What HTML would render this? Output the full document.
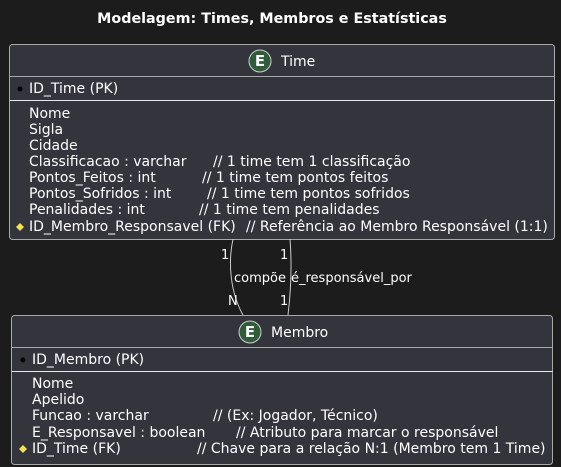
<!DOCTYPE html>
<html><head><meta charset="utf-8"><style>
html,body{margin:0;padding:0;background:#1c1c1c;}
svg{display:block;}
text{font-family:"DejaVu Sans",sans-serif;fill:#fff;font-size:14px;}
.s{font-size:13px;}
</style></head><body>
<svg width="561" height="467" viewBox="0 0 561 467">
<rect width="561" height="467" fill="#1c1c1c"/>
<text x="272" y="23" text-anchor="middle" font-weight="bold" style="font-size:14.3px">Modelagem: Times, Membros e Estatísticas</text>

<rect x="9.5" y="44.5" width="545" height="195" rx="3" fill="#33343c" stroke="#a8a8a8"/>
<line x1="9.5" y1="76.5" x2="554.5" y2="76.5" stroke="#a8a8a8"/>
<line x1="9.5" y1="100.5" x2="554.5" y2="100.5" stroke="#e8e8e8"/>
<circle cx="260" cy="61" r="11" fill="#2f5d3a" stroke="#cfcfcf"/>
<text x="260" y="66" text-anchor="middle" font-weight="bold" style="font-size:15px">E</text>
<text x="281" y="66">Time</text>
<circle cx="20" cy="89" r="2.5" fill="#000"/>
<text x="29" y="93">ID_Time (PK)</text>
<text x="29" y="118">Nome</text>
<text x="29" y="134">Sigla</text>
<text x="29" y="150">Cidade</text>
<text x="29" y="166">Classificacao : varchar</text><text x="213" y="166">// 1 time tem 1 classificação</text>
<text x="29" y="182">Pontos_Feitos : int</text><text x="202" y="182">// 1 time tem pontos feitos</text>
<text x="29" y="198">Pontos_Sofridos : int</text><text x="207" y="198">// 1 time tem pontos sofridos</text>
<text x="29" y="214">Penalidades : int</text><text x="199" y="214">// 1 time tem penalidades</text>
<path d="M20 223 L24 227 L20 231 L16 227Z" fill="#f5e050"/>
<text x="29" y="231">ID_Membro_Responsavel (FK)</text><text x="246" y="231">// Referência ao Membro Responsável (1:1)</text>

<path d="M233 239 C228 262 230 292 243 315" fill="none" stroke="#ccc"/>
<path d="M290 239 C292 265 291 290 288 315" fill="none" stroke="#ccc"/>
<text x="221" y="259" class="s">1</text>
<text x="280" y="259" class="s">1</text>
<text x="234" y="282" class="s">compõe</text>
<text x="291" y="282" class="s">é_responsável_por</text>
<text x="228" y="305" class="s">N</text>
<text x="280" y="305" class="s">1</text>

<rect x="11.5" y="315.5" width="541" height="149" rx="3" fill="#33343c" stroke="#a8a8a8"/>
<line x1="11.5" y1="347.5" x2="552.5" y2="347.5" stroke="#a8a8a8"/>
<line x1="11.5" y1="371.5" x2="552.5" y2="371.5" stroke="#e8e8e8"/>
<circle cx="250" cy="332" r="11" fill="#2f5d3a" stroke="#cfcfcf"/>
<text x="250" y="337" text-anchor="middle" font-weight="bold" style="font-size:15px">E</text>
<text x="271" y="337">Membro</text>
<circle cx="23" cy="360" r="2.5" fill="#000"/>
<text x="32" y="364">ID_Membro (PK)</text>
<text x="32" y="388">Nome</text>
<text x="32" y="404">Apelido</text>
<text x="32" y="420">Funcao : varchar</text><text x="213" y="420">// (Ex: Jogador, Técnico)</text>
<text x="32" y="437">E_Responsavel : boolean</text><text x="236" y="437">// Atributo para marcar o responsável</text>
<path d="M23 445 L27 449 L23 453 L19 449Z" fill="#f5e050"/>
<text x="32" y="453">ID_Time (FK)</text><text x="197" y="453">// Chave para a relação N:1 (Membro tem 1 Time)</text>
</svg>
</body></html>
